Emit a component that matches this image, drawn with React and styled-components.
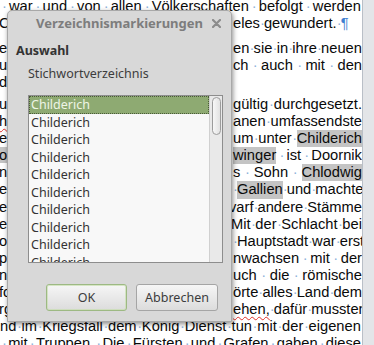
import styled, { createGlobalStyle } from "styled-components";

const GlobalStyle = createGlobalStyle`
  html, body {
    margin: 0;
    padding: 0;
    overflow: hidden;
    background: #e3e5e8;
  }
`;

const Screen = styled.div`
  position: relative;
  width: 374px;
  height: 345px;
  overflow: hidden;
  display: flex;
  background: #e3e5e8;
`;

const Page = styled.div`
  width: 362px;
  flex: none;
  overflow: hidden;
  background: #ffffff;
  border-right: 1px solid #b9bfc7;
  color: #0a0a0a;
  font-family: "Liberation Sans", Arial, sans-serif;
  font-size: 14.7px;
`;

const Column = styled.div`
  display: flex;
  flex-direction: column;
  margin-top: -2.5px;
`;

const Paragraph = styled.div`
  display: flex;
  flex-direction: column;
  margin-top: ${(p) => p.$gap || 0}px;
`;

const Line = styled.div`
  height: 17.1px;
  line-height: 17.1px;
  display: flex;
  align-items: center;
  white-space: nowrap;
`;

const Edge = styled.span`
  flex: none;
  margin-left: -1px;
`;

const Tail = styled.span`
  flex: none;
  margin-left: auto;
  width: ${(p) => 362 - (p.$from || 233)}px;
  display: flex;
  justify-content: ${(p) => (p.$ragged ? "flex-start" : "space-between")};
`;

const Full = styled.span`
  flex: 1;
  display: flex;
  justify-content: space-between;
  padding-left: ${(p) => p.$pad || 0}px;
  padding-right: 1px;
`;

const Dot = styled.span`
  flex: none;
  width: 4px;
  text-align: center;
  color: #8db2da;
`;

const Pilcrow = styled.span`
  color: #3f7fd0;
`;

const Mark = styled.span`
  background: #c4c4c4;
`;

const Typo = styled.span`
  text-decoration: underline wavy #e0302a;
  text-decoration-thickness: 1px;
  text-underline-offset: 2px;
`;

/* dialog */

const Dialog = styled.div`
  position: absolute;
  left: 7px;
  top: 10px;
  width: 225px;
  height: 312px;
  box-sizing: border-box;
  display: flex;
  flex-direction: column;
  background: #d8d8d8;
  border: 1px solid #a8a8a8;
  border-radius: 5px 5px 0 0;
  box-shadow: 1px 2px 5px rgba(0, 0, 0, 0.45);
  font-family: "Noto Sans", "Open Sans", sans-serif;
  font-size: 12.5px;
  color: #3c3c3c;
`;

const TitleBar = styled.div`
  height: 24px;
  display: grid;
  grid-template-columns: 1fr auto 1fr;
  align-items: center;
  padding: 0 10px 0 10px;
`;

const Title = styled.div`
  grid-column: 2;
  font-size: 13px;
  font-weight: bold;
  color: #7d7d7d;
`;

const Close = styled.svg`
  grid-column: 3;
  justify-self: end;
  width: 9px;
  height: 9px;
`;

const Body = styled.div`
  flex: 1;
  display: flex;
  flex-direction: column;
  padding: 7px 13px 10px 8px;
`;

const Heading = styled.div`
  font-weight: bold;
  line-height: 17px;
  color: #333;
`;

const Label = styled.div`
  margin: 6px 0 0 12px;
  line-height: 17px;
`;

const ListBox = styled.div`
  margin: 13px 0 0 12px;
  width: 195px;
  height: 168px;
  box-sizing: border-box;
  display: flex;
  overflow: hidden;
  border: 1px solid #8d8d8d;
  background: #f8f8f8;
`;

const Rows = styled.div`
  flex: 1;
  display: flex;
  flex-direction: column;
  overflow: hidden;
`;

const Row = styled.div`
  flex: none;
  height: 17.5px;
  line-height: 17.5px;
  padding-left: 2px;
  box-sizing: border-box;
  color: ${(p) => (p.$selected ? "#eef5e6" : "#333")};
  background: ${(p) => (p.$selected ? "#8eaa72" : "transparent")};
  outline: ${(p) => (p.$selected ? "1px dotted #4a5a38" : "none")};
  outline-offset: -1px;
`;

const Track = styled.div`
  flex: none;
  width: 13px;
  box-sizing: border-box;
  padding: 1px 1px 0 2px;
  background: #e9e9e9;
  border-left: 1px solid #d0d0d0;
`;

const Thumb = styled.div`
  height: 38px;
  box-sizing: border-box;
  border: 1px solid #9c9c9c;
  border-radius: 5px;
  background: linear-gradient(to right, #f7f7f7, #e2e2e2);
`;

const Buttons = styled.div`
  margin-top: auto;
  display: flex;
  justify-content: flex-end;
  gap: 9px;
`;

const Button = styled.button`
  width: ${(p) => p.$w}px;
  height: 27px;
  padding: 0;
  border-radius: 3px;
  border: 1px solid ${(p) => (p.$primary ? "#9db983" : "#a5a5a5")};
  box-shadow: ${(p) =>
    p.$primary ? "inset 0 0 0 1px rgba(200, 222, 175, 0.7)" : "none"};
  background: linear-gradient(#f6f6f6, #dcdcdc);
  font: inherit;
  color: #3c3c3c;
`;

const paragraphs = [
  {
    gap: 0,
    lines: [
      { full: "·war·und·von·allen·Völkerschaften·befolgt·werden", pad: 2 },
      { edge: "C", tail: "eles·gewundert.·¶", ragged: true },
    ],
  },
  {
    gap: 8,
    lines: [
      { edge: "e", tail: "en·sie·in·ihre·neuen" },
      { edge: "u", tail: "ch·auch·mit·den" },
      { edge: "d" },
    ],
  },
  {
    gap: 5,
    lines: [
      { edge: "u", tail: "gültig·durchgesetzt." },
      { edge: "~h~", tail: "anen·umfassendste" },
      { edge: "e", tail: "um·unter·[Childerich]" },
      { edge: "[o·]", tail: "[winger]·ist·Doornik" },
      { edge: "n", tail: "s·Sohn·[Chlodwig]" },
      { edge: "e", tail: "·[Gallien]·und·machte" },
      { edge: "e", tail: "varf·andere·Stämme", from: 229 },
      { edge: "er", tail: "Mit·der·Schlacht·bei", from: 231 },
      { edge: "o", tail: "·Hauptstadt·war·erst" },
      { edge: "p", tail: "nwachsen·mit·der" },
      { edge: "n", tail: "uch·die·römische" },
      { edge: "fo", tail: "örte·alles·Land·dem" },
      { edge: "rg", tail: "~ehen,~·dafür·mussten" },
      { full: "nd·im·Kriegsfall·dem·König·Dienst·tun·mit·der·eigenen" },
      { full: "·mit·Truppen.·Die·Fürsten·und·Grafen·gaben·diese", pad: 2 },
    ],
  },
];

function Word({ w }) {
  if (w === "¶") return <Pilcrow>¶</Pilcrow>;
  if (w.startsWith("[")) return <Mark>{w.slice(1, -1)}</Mark>;
  if (w.startsWith("~")) return <Typo>{w.slice(1, -1)}</Typo>;
  return <span>{w}</span>;
}

function Words({ text }) {
  return text.split("·").flatMap((w, i) => {
    const out = [];
    if (i > 0) out.push(<Dot key={"d" + i}>·</Dot>);
    if (w) out.push(<Word key={"w" + i} w={w} />);
    return out;
  });
}

function TextLine({ line }) {
  if (line.full) {
    return (
      <Line>
        <Full $pad={line.pad}>
          <Words text={line.full} />
        </Full>
      </Line>
    );
  }
  return (
    <Line>
      <Edge>
        <Word w={line.edge} />
      </Edge>
      {line.tail && (
        <Tail $from={line.from} $ragged={line.ragged}>
          <Words text={line.tail} />
        </Tail>
      )}
    </Line>
  );
}

const entries = Array.from({ length: 10 }, () => "Childerich");

export default function App() {
  return (
    <>
      <GlobalStyle />
      <Screen>
        <Page>
          <Column>
            {paragraphs.map((p, i) => (
              <Paragraph key={i} $gap={p.gap}>
                {p.lines.map((l, j) => (
                  <TextLine key={j} line={l} />
                ))}
              </Paragraph>
            ))}
          </Column>
        </Page>

        <Dialog>
          <TitleBar>
            <Title>Verzeichnismarkierungen</Title>
            <Close viewBox="0 0 9 9">
              <path
                d="M1 1 L8 8 M8 1 L1 8"
                stroke="#8c8c8c"
                strokeWidth="2.2"
                strokeLinecap="round"
              />
            </Close>
          </TitleBar>
          <Body>
            <Heading>Auswahl</Heading>
            <Label>Stichwortverzeichnis</Label>
            <ListBox>
              <Rows>
                {entries.map((e, i) => (
                  <Row key={i} $selected={i === 0}>
                    {e}
                  </Row>
                ))}
              </Rows>
              <Track>
                <Thumb />
              </Track>
            </ListBox>
            <Buttons>
              <Button $w={81} $primary>
                OK
              </Button>
              <Button $w={82}>Abbrechen</Button>
            </Buttons>
          </Body>
        </Dialog>
      </Screen>
    </>
  );
}
